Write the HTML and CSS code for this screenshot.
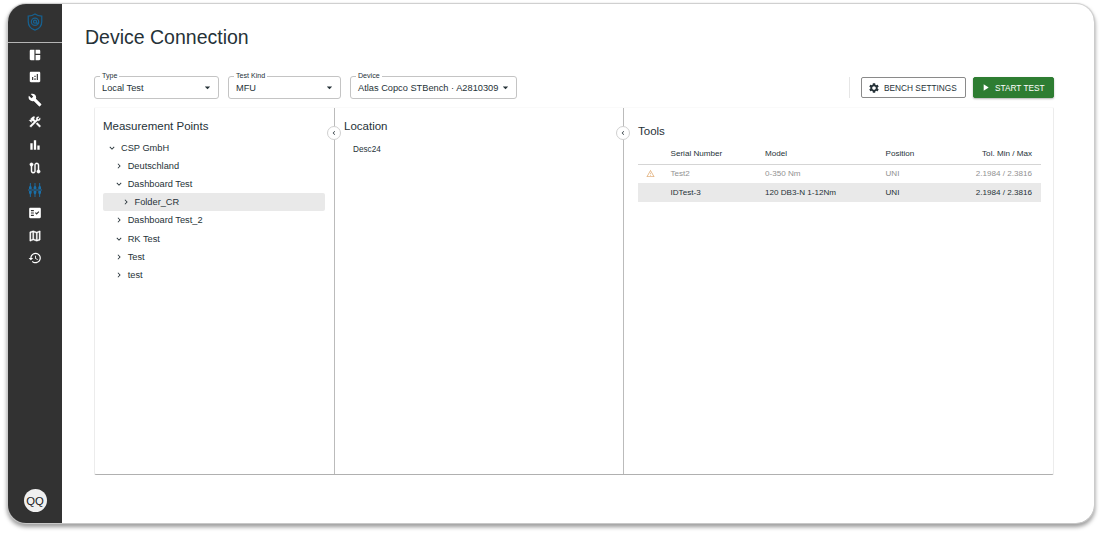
FILE: index.html
```html
<!DOCTYPE html>
<html lang="en">
<head>
    <meta charset="utf-8">
    <meta name="viewport" content="width=device-width, initial-scale=1">
    <title>Device Connection</title>
    <link rel="stylesheet" href="styles.css">
</head>
<body>
<svg class="sprite">
    <symbol id="right" viewBox="0 0 24 24"><path d="M10 6 8.590 7.410 13.170 12l-4.580 4.590L10 18l6-6z"/></symbol>
    <symbol id="left" viewBox="0 0 24 24"><path d="M15.410 7.410 14 6l-6 6 6 6 1.410-1.410L10.830 12z"/></symbol>
    <symbol id="down" viewBox="0 0 24 24"><path d="M16.590 8.590 12 13.170 7.410 8.590 6 10l6 6 6-6z"/></symbol>
    <symbol id="arrow" viewBox="0 0 24 24"><path d="m7 10 5 5 5-5z"/></symbol>
</svg>
<div class="window">
    <nav class="sidebar">
        <div class="logo">
            <svg viewBox="0 0 24 24">
                <path d="M12 1.300c-2.500 1.800-5.500 2.700-9 2.900v7c0 5.300 3.800 9.900 9 11.500 5.200-1.600 9-6.200 9-11.500v-7c-3.500-.2-6.500-1.100-9-2.900z"/>
                <circle cx="12" cy="11.600" r="4.900"/>
                <circle cx="12" cy="11.600" r="2"/>
                <path d="M14 11.600v1.200c0 1.600 2.500 1.400 2.900-.500"/>
            </svg>
        </div>
        <div class="menu">
            <svg viewBox="0 0 24 24"><path d="M11 21H5c-1.100 0-2-.9-2-2V5c0-1.100.9-2 2-2h6v18zm2 0h6c1.100 0 2-.9 2-2v-7h-8v9zm8-11V5c0-1.100-.9-2-2-2h-6v7h8z"/></svg>
            <svg viewBox="0 0 24 24"><path d="M19 3H5c-1.100 0-2 .9-2 2v14c0 1.100.9 2 2 2h14c1.100 0 2-.9 2-2V5c0-1.100-.9-2-2-2zM9 17H7v-5h2v5zm4 0h-2v-3h2v3zm0-5h-2v-2h2v2zm4 5h-2V7h2v10z"/></svg>
            <svg viewBox="0 0 24 24"><path d="m22.700 19-9.100-9.100c.9-2.300.4-5-1.500-6.900-2-2-5-2.400-7.400-1.300L9 6 6 9 1.600 4.700C.4 7.100.9 10.100 2.900 12.100c1.900 1.900 4.600 2.400 6.900 1.500l9.100 9.100c.4.4 1 .4 1.400 0l2.300-2.300c.5-.4.5-1.100.1-1.400z"/></svg>
            <svg class="thick" viewBox="0 0 24 24"><path d="m13.780 15.170 2.120-2.120 6 6-2.120 2.120z"/><path d="M17.500 10c1.930 0 3.500-1.570 3.500-3.500 0-.58-.16-1.120-.41-1.600l-2.700 2.700-1.490-1.490 2.700-2.700c-.48-.25-1.020-.41-1.600-.41C15.570 3 14 4.570 14 6.500c0 .41.08.8.21 1.160l-1.850 1.850-1.780-1.780.71-.71-1.410-1.410L12 3.490c-1.170-1.170-3.070-1.170-4.240 0L4.220 7.030l1.410 1.410H2.810l-.71.71 3.540 3.540.71-.71V9.150l1.410 1.410.71-.71 1.780 1.780-7.410 7.410 2.120 2.120L16.340 9.790c.36.13.75.21 1.160.21z"/></svg>
            <svg viewBox="0 0 24 24"><path d="M4 9h4v11H4zm12 4h4v7h-4zm-6-9h4v16h-4z"/></svg>
            <svg class="thick" viewBox="0 0 24 24"><path d="M19 15.180V7c0-2.210-1.790-4-4-4s-4 1.790-4 4v10c0 1.100-.9 2-2 2s-2-.9-2-2V8.820C8.160 8.400 9 7.300 9 6c0-1.660-1.340-3-3-3S3 4.340 3 6c0 1.300.84 2.400 2 2.820V17c0 2.210 1.790 4 4 4s4-1.790 4-4V7c0-1.100.9-2 2-2s2 .9 2 2v8.180c-1.160.41-2 1.510-2 2.820 0 1.660 1.340 3 3 3s3-1.340 3-3c0-1.300-.84-2.400-2-2.820z"/></svg>
            <svg class="active" viewBox="0 0 24 24"><path d="M3.200 0h1.600v4.500L6.300 7v3.400H1.700V7l1.500-2.500zm8 0h1.600v4.500L14.300 7v3.400H9.700V7l1.500-2.500zm8 0h1.600v4.500L22.300 7v3.400h-4.600V7l1.500-2.500zM0 11.300h24v1.400H0zM1.700 13.600h4.600V17l-1.500 2.500V24H3.200v-4.500L1.700 17zm8 0h4.600V17l-1.500 2.500V24h-1.600v-4.500L9.700 17zm8 0h4.600V17l-1.500 2.500V24h-1.600v-4.500L17.700 17z"/></svg>
            <svg viewBox="0 0 24 24"><path fill-rule="evenodd" d="M20 3H4c-1.100 0-2 .9-2 2v14c0 1.100.9 2 2 2h16c1.100 0 2-.9 2-2V5c0-1.100-.9-2-2-2zM10 17H5v-2h5v2zm0-4H5v-2h5v2zm0-4H5V7h5v2zm4.820 6L12 12.160l1.410-1.410 1.410 1.420L17.990 9l1.420 1.420L14.820 15z"/></svg>
            <svg class="thick" viewBox="0 0 24 24"><path d="m20.500 3-.16.030L15 5.100 9 3 3.360 4.900c-.21.070-.36.250-.36.480V20.500c0 .28.22.5.5.5l.16-.03L9 18.900l6 2.100 5.640-1.900c.21-.07.36-.25.36-.48V3.500c0-.28-.22-.5-.5-.5zM10 5.470l4 1.400v11.660l-4-1.400V5.470zm-5 .99 3-1.010v11.700l-3 1.160V6.460zm14 11.080-3 1.010V6.860l3-1.160v11.840z"/></svg>
            <svg viewBox="0 0 24 24"><path d="M13 3c-4.970 0-9 4.030-9 9H1l3.890 3.890.07.14L9 12H6c0-3.870 3.130-7 7-7s7 3.130 7 7-3.130 7-7 7c-1.930 0-3.680-.79-4.940-2.060l-1.420 1.420C8.270 19.990 10.510 21 13 21c4.970 0 9-4.030 9-9s-4.030-9-9-9zm-1 5v5l4.280 2.540.72-1.210-3.500-2.080V8H12z"/></svg>
        </div>
        <div class="avatar">QQ</div>
    </nav>
    <main>
        <h1>Device Connection</h1>
        <div class="toolbar">
            <fieldset class="select type">
                <legend>Type</legend>
                <span>Local Test</span>
                <svg><use href="#arrow"/></svg>
            </fieldset>
            <fieldset class="select kind">
                <legend>Test Kind</legend>
                <span>MFU</span>
                <svg><use href="#arrow"/></svg>
            </fieldset>
            <fieldset class="select device">
                <legend>Device</legend>
                <span>Atlas Copco STBench · A2810309</span>
                <svg><use href="#arrow"/></svg>
            </fieldset>
            <div class="actions">
                <button class="settings">
                    <svg viewBox="0 0 24 24"><path d="M19.140 12.940c.04-.3.060-.61.060-.94 0-.32-.02-.64-.07-.94l2.030-1.580c.18-.14.23-.41.12-.61l-1.920-3.320c-.12-.22-.37-.29-.59-.22l-2.390.96c-.5-.38-1.030-.7-1.620-.94l-.36-2.540c-.04-.24-.24-.41-.48-.41h-3.840c-.24 0-.43.17-.47.41l-.36 2.540c-.59.24-1.130.57-1.620.94l-2.390-.96c-.22-.08-.47 0-.59.22L2.740 8.870c-.12.21-.08.47.12.61l2.030 1.580c-.05.3-.09.63-.09.94s.02.64.07.94l-2.030 1.580c-.18.14-.23.41-.12.61l1.920 3.320c.12.22.37.29.59.22l2.390-.96c.5.38 1.030.7 1.620.94l.36 2.540c.05.24.24.41.48.41h3.840c.24 0 .44-.17.47-.41l.36-2.540c.59-.24 1.130-.56 1.620-.94l2.390.96c.22.08.47 0 .59-.22l1.920-3.320c.12-.22.07-.47-.12-.61l-2.010-1.580zM12 15.600c-1.980 0-3.600-1.620-3.600-3.600s1.620-3.600 3.600-3.600 3.600 1.620 3.600 3.600-1.620 3.600-3.600 3.600z"/></svg>
                    BENCH SETTINGS
                </button>
                <button class="start">
                    <svg viewBox="0 0 24 24"><path d="M8 5v14l11-7z"/></svg>
                    START TEST
                </button>
            </div>
        </div>
        <div class="panels">
            <section class="points">
                <h2>Measurement Points</h2>
                <ul class="tree">
                    <li><svg><use href="#down"/></svg>CSP GmbH</li>
                    <li class="level1"><svg><use href="#right"/></svg>Deutschland</li>
                    <li class="level1"><svg><use href="#down"/></svg>Dashboard Test</li>
                    <li class="level2 selected"><svg><use href="#right"/></svg>Folder_CR</li>
                    <li class="level1"><svg><use href="#right"/></svg>Dashboard Test_2</li>
                    <li class="level1"><svg><use href="#down"/></svg>RK Test</li>
                    <li class="level1"><svg><use href="#right"/></svg>Test</li>
                    <li class="level1"><svg><use href="#right"/></svg>test</li>
                </ul>
                <div class="collapse"><svg><use href="#left"/></svg></div>
            </section>
            <section class="location">
                <h2>Location</h2>
                <p>Desc24</p>
                <div class="collapse"><svg><use href="#left"/></svg></div>
            </section>
            <section class="tools">
                <h2>Tools</h2>
                <table>
                    <thead>
                        <tr><th class="warn"></th><th class="serial">Serial Number</th><th class="model">Model</th><th class="position">Position</th><th class="tol">Tol. Min / Max</th></tr>
                    </thead>
                    <tbody>
                        <tr class="disabled">
                            <td class="warn"><svg viewBox="0 0 24 24"><path d="M12 5.990 19.530 19H4.470L12 5.990M12 2 1 21h22L12 2zm1 14h-2v2h2v-2zm0-6h-2v4h2v-4z"/></svg></td>
                            <td>Test2</td><td>0-350 Nm</td><td>UNI</td><td class="tol">2.1984 / 2.3816</td>
                        </tr>
                        <tr class="selected">
                            <td></td><td>IDTest-3</td><td>120 DB3-N 1-12Nm</td><td>UNI</td><td class="tol">2.1984 / 2.3816</td>
                        </tr>
                    </tbody>
                </table>
            </section>
        </div>
    </main>
</div>
</body>
</html>
```
FILE: styles.css
```css
* {
    box-sizing: border-box;
}

body {
    margin: 0;
    padding: 4px 7px 0 8px;
    height: 534px;
    overflow: hidden;
    background: #fff;
    color: #263238;
    font-family: "Liberation Sans", Arial, sans-serif;
    font-size: 9.250px;
}

h1, h2, p, ul {
    margin: 0;
    padding: 0;
    font-weight: normal;
}

svg {
    display: block;
    flex: none;
    fill: currentColor;
}

.sprite {
    display: none;
}

.window {
    display: flex;
    height: 519px;
    border-radius: 18px;
    overflow: hidden;
    box-shadow: 0 0 1px 1px #ccc, 0 3px 4px 1px rgba(0, 0, 0, 0.4);
}

/* sidebar */
.sidebar {
    display: flex;
    flex: none;
    flex-direction: column;
    align-items: center;
    width: 54px;
    background: #323232;
    color: #fff;
}

.logo {
    display: flex;
    justify-content: center;
    width: 100%;
    height: 39px;
    padding-top: 9px;
    border-bottom: 1px solid #b5b5b5;
}

.logo svg {
    width: 18px;
    height: 18px;
    fill: none;
    stroke: #17608f;
    stroke-width: 1.700;
}

.menu {
    display: flex;
    flex-direction: column;
    align-items: center;
    gap: 8.650px;
    padding-top: 4.500px;
}

.menu svg {
    width: 14px;
    height: 14px;
}

.menu .thick {
    stroke: currentColor;
    stroke-width: 0.600;
}

.menu .active {
    color: #1a6fa8;
}

.avatar {
    display: flex;
    align-items: center;
    justify-content: center;
    width: 23px;
    height: 23px;
    margin-top: auto;
    margin-bottom: 11px;
    border-radius: 50%;
    background: #f0f0f0;
    color: #222;
    font-size: 11.300px;
}

/* content */
main {
    flex: 1;
    min-width: 0;
    padding: 22px 40px 0 32px;
}

h1 {
    margin-left: -9px;
    font-size: 19.500px;
    line-height: 23px;
}

.toolbar {
    display: flex;
    align-items: flex-start;
    gap: 9px;
    height: 35px;
    margin-top: 22.500px;
}

.select {
    display: flex;
    align-items: center;
    justify-content: space-between;
    height: 27px;
    margin: 0;
    padding: 0 4px 3px 7px;
    border: 1px solid #c4c4c4;
    border-radius: 3px;
    white-space: nowrap;
}

.select legend {
    height: 9px;
    margin-left: -2px;
    padding: 0 2px;
    font-size: 7.100px;
    line-height: 9px;
}

.select svg {
    width: 13px;
    height: 13px;
}

.type {
    width: 125px;
}

.kind {
    width: 113px;
}

.device {
    width: 167px;
}

.actions {
    display: flex;
    gap: 7px;
    height: 21px;
    margin-top: 5.500px;
    margin-left: auto;
    padding-left: 11px;
    border-left: 1px solid #e6e6e6;
}

button {
    display: flex;
    align-items: center;
    padding: 0;
    border: 1px solid #8a8a8a;
    border-radius: 2px;
    background: #fff;
    color: #263238;
    font-family: inherit;
    font-size: 8.300px;
    white-space: nowrap;
}

.settings {
    width: 105px;
    padding-left: 6px;
    gap: 4px;
}

.settings svg {
    width: 12px;
    height: 12px;
}

.start {
    width: 81px;
    padding-left: 6px;
    gap: 4px;
    border-color: #2e7d32;
    background: #2e7d32;
    color: #fff;
    box-shadow: 0 1px 2px rgba(0, 0, 0, 0.3);
}

.start svg {
    width: 11px;
    height: 11px;
}

.panels {
    display: flex;
    height: 368px;
    border: 1px solid #ececec;
    border-top-color: #fafafa;
    border-bottom-color: #b0b0b0;
    border-radius: 2px;
}

.panels section {
    position: relative;
    padding-top: 11px;
}

h2 {
    font-size: 11.500px;
    line-height: 14px;
}

.points {
    width: 240px;
    padding-left: 8px;
    border-right: 1px solid #bbb;
}

.location {
    width: 289px;
    padding-left: 9px;
    border-right: 1px solid #bbb;
}

.location p {
    padding: 12px 0 0 9px;
    font-size: 8.200px;
}

.collapse {
    position: absolute;
    top: 18px;
    right: -7px;
    z-index: 1;
    display: flex;
    align-items: center;
    justify-content: center;
    width: 14px;
    height: 14px;
    border: 1px solid #d0d0d0;
    border-radius: 50%;
    background: #fff;
}

.collapse svg {
    width: 8px;
    height: 8px;
}

.tree {
    padding-top: 6.300px;
    list-style: none;
}

.tree li {
    display: flex;
    align-items: center;
    gap: 4px;
    width: 222px;
    height: 18.150px;
    padding-left: 4px;
    border-radius: 2px;
}

.tree svg {
    width: 10px;
    height: 10px;
}

.tree .level1 {
    padding-left: 10.700px;
}

.tree .level2 {
    padding-left: 17.500px;
}

.selected {
    background: #e9e9e9;
}

.panels .tools {
    flex: 1;
    padding: 16px 12px 0 14px;
}

table {
    width: 403px;
    margin-top: 6.500px;
    border-collapse: collapse;
    table-layout: fixed;
    font-size: 8.100px;
}

th, td {
    height: 19px;
    padding: 0;
    font-weight: normal;
    text-align: left;
    white-space: nowrap;
}

th {
    height: 20px;
    border-bottom: 1px solid #d5d5d5;
}

.warn {
    width: 32.500px;
}

.warn svg {
    width: 9px;
    height: 9px;
    margin-left: 8px;
    color: #e3b483;
}

.serial {
    width: 94.500px;
}

.model {
    width: 120.500px;
}

.position {
    width: 70px;
}

.tol {
    padding-right: 9px;
    text-align: right;
}

.disabled {
    color: #929292;
}
```
